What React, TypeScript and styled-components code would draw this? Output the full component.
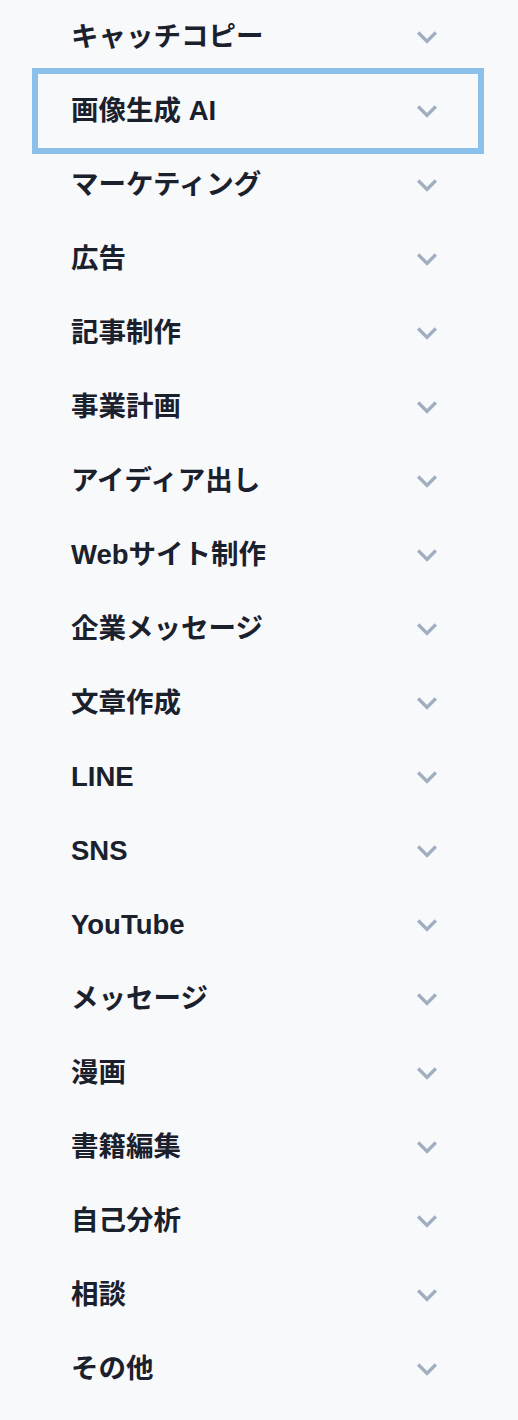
import React from "react";
import styled, { createGlobalStyle } from "styled-components";

const Global = createGlobalStyle`
  html, body { margin: 0; padding: 0; background: #f8f9fb; }
  body { font-family: "Liberation Sans", "Noto Sans CJK JP", sans-serif; }
`;

const List = styled.div`
  display: flex;
  flex-direction: column;
  width: 440px;
  margin-left: 38px;
`;

const Row = styled.button<{ $focused?: boolean }>`
  display: flex;
  align-items: center;
  justify-content: space-between;
  height: 74px;
  padding: 0 41px 0 33px;
  border: none;
  background: transparent;
  font-family: "Liberation Sans", "Noto Sans CJK JP", sans-serif;
  font-weight: 700;
  font-size: 27.5px;
  color: #1a202c;
  text-align: left;
  cursor: pointer;
  box-shadow: ${(p) => (p.$focused ? "0 0 0 6px rgba(66,153,225,0.6)" : "none")};
`;

const Label = styled.span`
  line-height: 1;
`;

const Chevron = styled.svg`
  width: 40px;
  height: 40px;
  margin-right: -10px;
  fill: #a0aec0;
  flex-shrink: 0;
`;

const items = [
  "キャッチコピー",
  "画像生成 AI",
  "マーケティング",
  "広告",
  "記事制作",
  "事業計画",
  "アイディア出し",
  "Webサイト制作",
  "企業メッセージ",
  "文章作成",
  "LINE",
  "SNS",
  "YouTube",
  "メッセージ",
  "漫画",
  "書籍編集",
  "自己分析",
  "相談",
  "その他",
];

export default function App() {
  return (
    <>
      <Global />
      <List>
        {items.map((t, i) => (
          <Row key={t} $focused={i === 1}>
            <Label>{t}</Label>
            <Chevron viewBox="0 0 24 24" aria-hidden="true">
              <path d="M16.59 8.59L12 13.17 7.41 8.59 6 10l6 6 6-6z" />
            </Chevron>
          </Row>
        ))}
      </List>
    </>
  );
}
